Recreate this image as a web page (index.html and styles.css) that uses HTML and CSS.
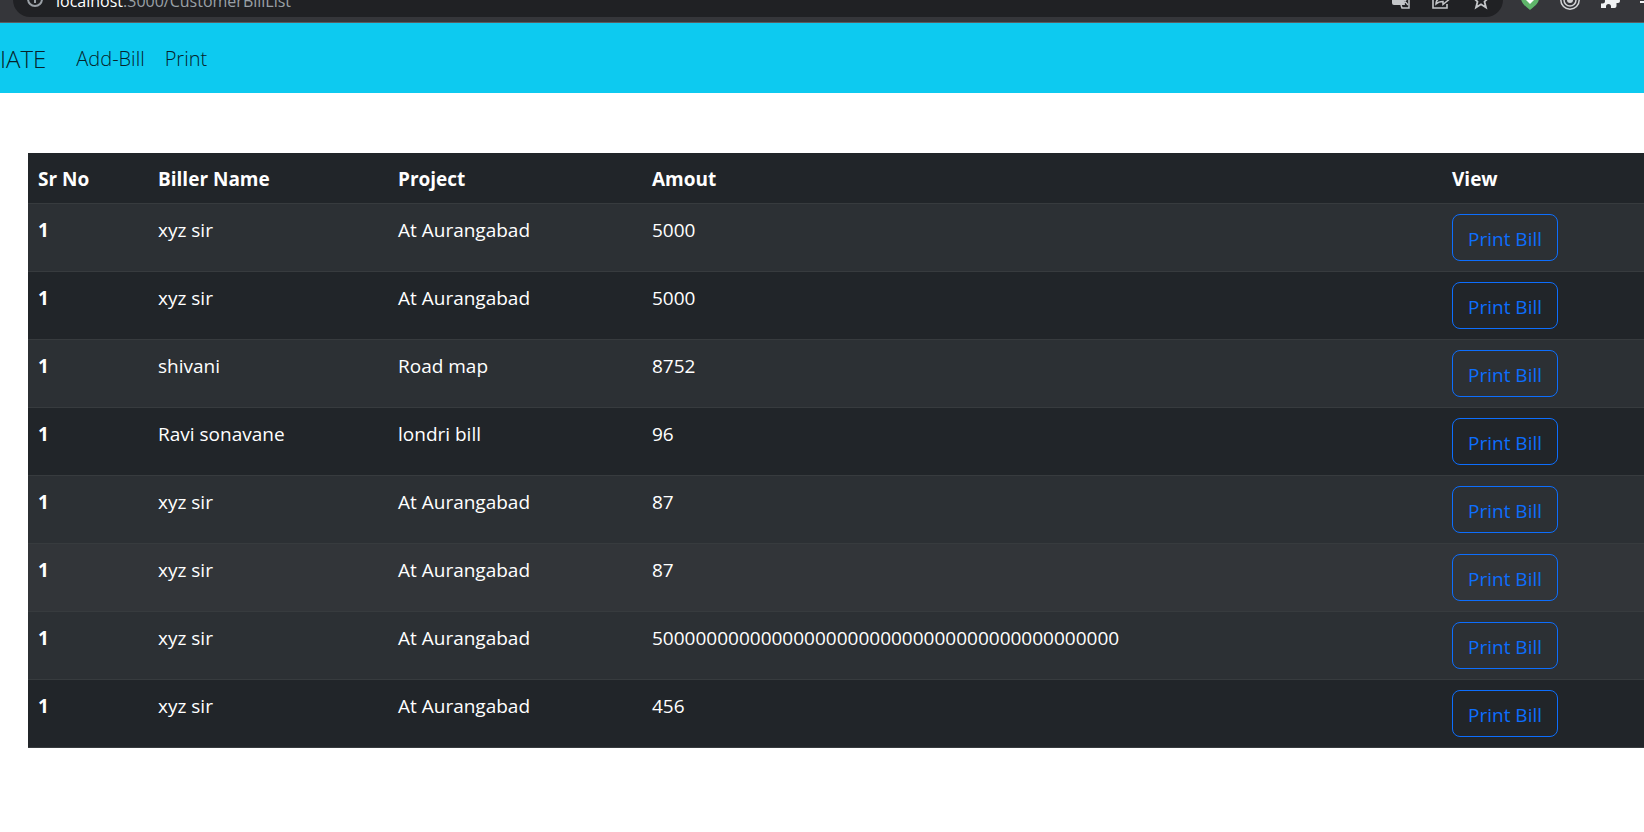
FILE: index.html
```html
<!DOCTYPE html>
<html lang="en">
<head>
<meta charset="utf-8">
<title>Customer Bill List</title>
<link rel="stylesheet" href="styles.css">
</head>
<body>
<header class="toolbar">
  <div class="address">
    <svg class="icon" viewBox="0 0 20 20"><circle cx="10" cy="9" r="7" fill="none" stroke="#9aa0a6" stroke-width="2"/><path d="M9 5h2v2H9zM9 8h2v5H9z" fill="#9aa0a6"/></svg>
    <span class="url"><span class="host">localhost</span>:3000/CustomerBillList</span>
    <svg class="icon" viewBox="0 0 20 20"><path d="M1 1h10l3 14H3a2 2 0 0 1-2-2z" fill="#c4c6c9"/><path d="M12 4h6v14h-7l-1-3" fill="none" stroke="#c4c6c9" stroke-width="1.500"/><path d="M12 9h5M15.500 9l-3 5M13 10l4 5" stroke="#c4c6c9" stroke-width="1.300"/></svg>
    <svg class="icon" viewBox="0 0 20 20"><path d="M6 4H2v14h14v-4" fill="none" stroke="#c4c6c9" stroke-width="1.600"/><path d="M5 14c0-4 3-6 7-6V4l6 5.500-6 5v-3c-3 0-5 .5-7 2.500z" fill="none" stroke="#c4c6c9" stroke-width="1.500"/></svg>
    <svg class="icon" viewBox="0 0 20 20"><path d="M10 2l2.200 5.400 5.300.5-4 3.800 1.500 5.800-5-3.200-5 3.200 1.500-5.800-4-3.800 5.300-.5z" fill="none" stroke="#c4c6c9" stroke-width="1.800"/></svg>
  </div>
  <div class="extensions">
    <svg class="icon" viewBox="0 0 20 20"><path d="M1 2h18v6c0 5-4 8-9 12-5-4-9-7-9-12z" fill="#5fb56a"/><path d="M10 6l4 4-4 4-4-4z" fill="#fff"/></svg>
    <svg class="icon" viewBox="0 0 20 20"><g fill="none" stroke="#d4d5d7" stroke-width="1.500"><circle cx="10" cy="10" r="9.200"/><circle cx="10" cy="10" r="6"/></g><circle cx="10" cy="10" r="3" fill="#d4d5d7"/></svg>
    <svg class="icon" viewBox="0 0 20 20"><path d="M18 9h-1.500V5a2 2 0 0 0-2-2H11a2.500 2.500 0 0 0-5 0H3a2 2 0 0 0-2 2v3.500h1.500a2.500 2.500 0 0 1 0 5H1V18h5v-1.500a2.500 2.500 0 0 1 5 0V18h3.500a2 2 0 0 0 2-2v-3H18a2 2 0 0 0 0-4z" fill="#f1f3f4"/></svg>
    <svg class="icon" viewBox="0 0 20 20"><path d="M0 12h14" stroke="#f1f3f4" stroke-width="2"/></svg>
  </div>
</header>
<nav class="navbar">
  <a class="brand" href="#">IATE</a>
  <a class="nav-link" href="#">Add-Bill</a>
  <a class="nav-link" href="#">Print</a>
</nav>
<main class="content">
  <table class="bills">
    <colgroup><col class="col-no"><col class="col-name"><col class="col-project"><col><col class="col-view"></colgroup>
    <thead><tr><th scope="col">Sr No</th><th scope="col">Biller Name</th><th scope="col">Project</th><th scope="col">Amout</th><th scope="col">View</th></tr></thead>
    <tbody>
      <tr><th scope="row">1</th><td>xyz sir</td><td>At Aurangabad</td><td>5000</td><td><button class="btn" type="button">Print Bill</button></td></tr>
      <tr><th scope="row">1</th><td>xyz sir</td><td>At Aurangabad</td><td>5000</td><td><button class="btn" type="button">Print Bill</button></td></tr>
      <tr><th scope="row">1</th><td>shivani</td><td>Road map</td><td>8752</td><td><button class="btn" type="button">Print Bill</button></td></tr>
      <tr><th scope="row">1</th><td>Ravi sonavane</td><td>londri bill</td><td>96</td><td><button class="btn" type="button">Print Bill</button></td></tr>
      <tr><th scope="row">1</th><td>xyz sir</td><td>At Aurangabad</td><td>87</td><td><button class="btn" type="button">Print Bill</button></td></tr>
      <tr class="active"><th scope="row">1</th><td>xyz sir</td><td>At Aurangabad</td><td>87</td><td><button class="btn" type="button">Print Bill</button></td></tr>
      <tr><th scope="row">1</th><td>xyz sir</td><td>At Aurangabad</td><td>5000000000000000000000000000000000000000000</td><td><button class="btn" type="button">Print Bill</button></td></tr>
      <tr><th scope="row">1</th><td>xyz sir</td><td>At Aurangabad</td><td>456</td><td><button class="btn" type="button">Print Bill</button></td></tr>
    </tbody>
  </table>
</main>
</body>
</html>
```
FILE: styles.css
```css
* { box-sizing: border-box; }

body {
  margin: 0;
  background: #fff;
  color: #212529;
  font-family: "Segoe UI", "Open Sans", sans-serif;
  font-size: 19px;
  line-height: 32px;
}

.toolbar {
  display: flex;
  align-items: flex-end;
  height: 23px;
  padding-bottom: 5px;
  overflow: hidden;
  background: #35363a;
  border-bottom: 1px solid #5b5c60;
}

.address {
  display: flex;
  flex: 1;
  align-items: center;
  gap: 20px;
  height: 34px;
  margin-left: 13px;
  padding: 0 12px;
  border-radius: 17px;
  background: #202124;
}

.icon { flex: none; width: 20px; height: 20px; }

.url {
  flex: 1;
  margin-left: -9px;
  padding-top: 2px;
  color: #9aa0a6;
  font-size: 16px;
  white-space: nowrap;
}

.host { color: #fff; }

.extensions {
  display: flex;
  align-items: center;
  gap: 20px;
  width: 141px;
  height: 34px;
  padding-left: 17px;
}

.navbar {
  display: flex;
  align-items: center;
  height: 70px;
  padding-top: 2px;
  background: #0dcaf0;
}

.navbar a { color: #06222a; text-decoration: none; }

.navbar .brand {
  margin-right: 20px;
  font-size: 24px;
  font-weight: 300;
}

.nav-link {
  padding: 10px;
  font-size: 20px;
  font-weight: 300;
}

.content { padding: 60px 0 60px 28px; }

.bills {
  width: 100%;
  table-layout: fixed;
  border-collapse: separate;
  border-spacing: 0;
  background: #212529;
  color: #fff;
}

.col-no { width: 120px; }
.col-name { width: 240px; }
.col-project { width: 254px; }
.col-view { width: 202px; }

.bills th,
.bills td {
  padding: 10px 10px 8px;
  border-bottom: 1px solid #373b3e;
  text-align: left;
  vertical-align: top;
}

.bills th { font-weight: 700; }

.bills tbody tr:nth-child(odd) { background: #2c3034; }
.bills tbody .active { background: #323539; }

.btn {
  display: block;
  height: 47px;
  margin-bottom: 2px;
  padding: 2px 15px 0;
  border: 1px solid #0d6efd;
  border-radius: 8px;
  background: transparent;
  color: #0d6efd;
  font: inherit;
}
```
